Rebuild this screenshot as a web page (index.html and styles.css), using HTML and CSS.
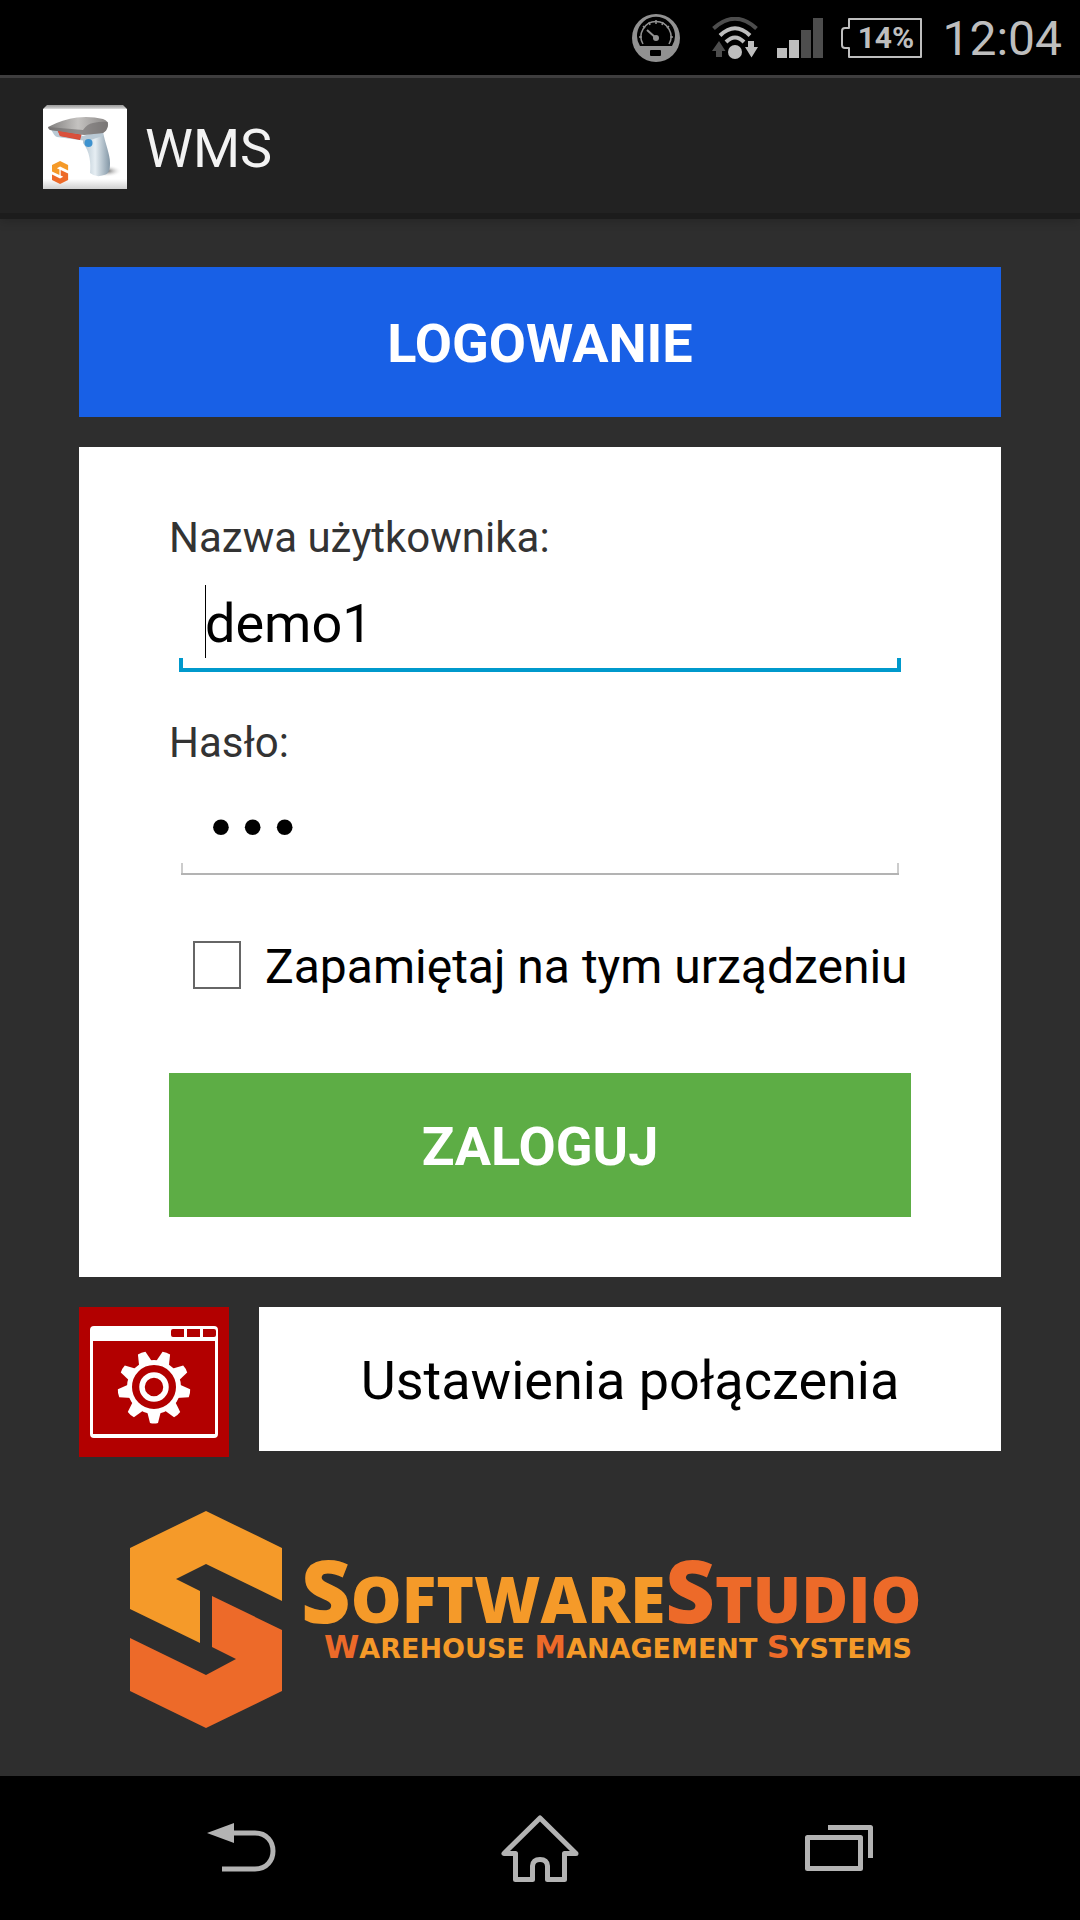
FILE: index.html
```html
<!DOCTYPE html>
<html lang="pl">
<head>
  <meta charset="UTF-8" />
  <title>WMS – Logowanie</title>
  <meta name="viewport" content="width=device-width, initial-scale=1" />
  <link rel="stylesheet" href="styles.css">
</head>
<body>

<div class="status-bar">
  <svg class="gauge" width="48" height="48" viewBox="0 0 48 48">
    <circle cx="24" cy="24" r="24" fill="#919191"/>
    <path d="M8 32 A19 19 0 1 1 40 32 Z" fill="#000"/>
    <path d="M11 30 A15 15 0 1 1 37 30" fill="none" stroke="#919191" stroke-width="1.5"/>
    <path d="M7 23h3M41 23h-3M11 12l2 2M37 12l-2 2M17 8l1 3M31 8l-1 3M24 6v4" stroke="#919191" stroke-width="1.5"/>
    <path d="M15 16l9 8" stroke="#919191" stroke-width="2"/>
    <circle cx="24" cy="24" r="3" fill="#919191"/>
    <rect x="18" y="36" width="11" height="6" rx="1" fill="#000"/>
  </svg>
  <svg class="wifi" width="46" height="42" viewBox="0 0 46 42" fill="none">
    <path d="M1.500 11.500 Q23 -8 44.500 11.500" stroke="#4d4d4d" stroke-width="4"/>
    <path d="M8 18.500 Q23 4 38 18.500" stroke="#bebebe" stroke-width="4"/>
    <path d="M14 25 Q23 16 32 25" stroke="#bebebe" stroke-width="4"/>
    <circle cx="23" cy="35" r="7" fill="#bebebe"/>
    <path d="M7 24l6.500 10H10v6H4v-6H0z" fill="#4d4d4d"/>
    <path d="M36 24h6v6h4l-6.500 10.500L33 30h3z" fill="#bebebe"/>
  </svg>
  <svg class="signal" width="46" height="40" viewBox="0 0 46 40">
    <path d="M0 30h10v10H0zM12 22h10v18H12z" fill="#bebebe"/>
    <path d="M24 12h10v28H24zM36 0h10v40H36z" fill="#4d4d4d"/>
  </svg>
  <div class="battery">
    <svg width="81" height="40" viewBox="0 0 81 40" fill="none">
      <path d="M8 10V1H80V39H8V30H4Q1 30 1 27V13Q1 10 4 10Z" stroke="#bebebe" stroke-width="2" stroke-linejoin="round"/>
    </svg>
    <span>14%</span>
  </div>
  <time class="clock">12:04</time>
</div>

<header class="action-bar">
  <svg width="84" height="84" viewBox="0 0 84 84">
    <defs>
      <linearGradient id="tile" x1="0" y1="0" x2="0" y2="1">
        <stop offset="0" stop-color="#999"/>
        <stop offset=".04" stop-color="#ccc"/>
        <stop offset=".05" stop-color="#fff"/>
        <stop offset=".88" stop-color="#fff"/>
        <stop offset="1" stop-color="#cfcfcf"/>
      </linearGradient>
      <linearGradient id="grip" x1="0" y1="0" x2="1" y2="0">
        <stop offset="0" stop-color="#b4c4cf"/>
        <stop offset=".45" stop-color="#e6eef3"/>
        <stop offset="1" stop-color="#8397a6"/>
      </linearGradient>
      <linearGradient id="head" x1="0" y1="0" x2="1" y2="0">
        <stop offset="0" stop-color="#807e7d"/>
        <stop offset=".5" stop-color="#c4c2c0"/>
        <stop offset="1" stop-color="#8a8786"/>
      </linearGradient>
      <radialGradient id="shade">
        <stop offset="0" stop-color="#666"/>
        <stop offset="1" stop-color="#fff" stop-opacity="0"/>
      </radialGradient>
    </defs>
    <path d="M4 0H80L84 4V84H0V4Z" fill="url(#tile)"/>
    <ellipse cx="64" cy="66" rx="15" ry="6" fill="url(#shade)"/>
    <path d="M40 32L60 27C62 38 67 49 67 58C67 65 66 69 61 70Q53 73 47 68C48 58 47 47 40 38Z" fill="url(#grip)"/>
    <path d="M8 24L40 31L60 25L60 31L44 36L14 32Q11 31 8 24Z" fill="#b9c9d4"/>
    <path d="M14 24L39 28L37 35L17 31Z" fill="#d2432f"/>
    <path d="M19 28L33 31V33L18 30Z" fill="#ee8a78"/>
    <path d="M5 22Q20 14 34 12.500Q48 11 60 14Q66 16 65 21Q64 26 60 28L41 30L7 25Q5 24 5 22Z" fill="url(#head)"/>
    <path d="M5 22L40 25Q44 19 50 18Q59 16 65 17Q65 25 60 28L41 30L7 25Z" fill="#6e6b6a" opacity=".6"/>
    <path d="M15 26L38 30L37 34L17 31Z" fill="#d9503c"/>
    <circle cx="45.500" cy="38" r="4" fill="#3d92cf"/>
    <path transform="translate(9 56) scale(.106)" fill="#f59a29" d="M76 0L152 37V90L76 53L46 68L70 80V132L0 98V37Z"/>
    <path transform="translate(9 56) scale(.106)" fill="#ed6a29" d="M82 85L152 119V180L76 217L0 180V127L76 164L106 148L82 136Z"/>
  </svg>
  <h1>WMS</h1>
</header>

<main class="content">
  <h2 class="title">LOGOWANIE</h2>

  <form class="card">
    <label class="field-label" for="user">Nazwa użytkownika:</label>
    <input class="field active" type="text" id="user" value="demo1">

    <label class="field-label" for="password">Hasło:</label>
    <input class="field" type="password" id="password" value="123">

    <div class="remember">
      <input type="checkbox" id="remember">
      <label for="remember">Zapamiętaj na tym urządzeniu</label>
    </div>

    <button class="login" type="button">ZALOGUJ</button>
  </form>

  <div class="settings">
    <button class="settings-icon" type="button" aria-label="Ustawienia">
      <svg width="150" height="150" viewBox="0 0 150 150" fill="#fff">
        <path fill-rule="evenodd" d="M15 19H135Q139 19 139 23V127Q139 131 135 131H15Q11 131 11 127V23Q11 19 15 19ZM14 34V127H136V34Z"/>
        <path fill="#b20000" d="M94 22H105V30H94Q92 30 92 28V24Q92 22 94 22ZM108 22H121V30H108ZM124 22H135Q137 22 137 24V28Q137 30 135 30H124Z"/>
        <g transform="translate(75 80)">
          <path id="tooth" d="M-7 24L-4 36Q0 37 4 36L7 24Z"/>
          <use href="#tooth" transform="rotate(40)"/>
          <use href="#tooth" transform="rotate(80)"/>
          <use href="#tooth" transform="rotate(120)"/>
          <use href="#tooth" transform="rotate(160)"/>
          <use href="#tooth" transform="rotate(200)"/>
          <use href="#tooth" transform="rotate(240)"/>
          <use href="#tooth" transform="rotate(280)"/>
          <use href="#tooth" transform="rotate(320)"/>
          <circle r="24.500" fill="none" stroke="#fff" stroke-width="5"/>
          <circle r="12" fill="none" stroke="#fff" stroke-width="5.500"/>
        </g>
      </svg>
    </button>
    <button class="settings-text" type="button">Ustawienia połączenia</button>
  </div>

  <div class="brand">
    <svg width="152" height="217" viewBox="0 0 152 217">
      <path fill="#f59a29" d="M76 0L152 37V90L76 53L46 68L70 80V132L0 98V37Z"/>
      <path fill="#ed6a29" d="M82 85L152 119V180L76 217L0 180V127L76 164L106 148L82 136Z"/>
    </svg>
    <div class="brand-text">
      <p class="brand-name"><b>S</b>OFTWARE<span class="red"><b>S</b>TUDIO</span></p>
      <p class="brand-sub"><b>W</b>AREHOUSE <b>M</b>ANAGEMENT <b>S</b>YSTEMS</p>
    </div>
  </div>
</main>

<nav class="nav-bar">
  <button type="button" aria-label="Wstecz">
    <svg width="70" height="50" viewBox="0 0 70 50">
      <path d="M1 10L28 0V20Z" fill="#b3b3b3"/>
      <path d="M27 10H49C73 10 73 46 49 46H16" fill="none" stroke="#b3b3b3" stroke-width="5"/>
    </svg>
  </button>
  <button type="button" aria-label="Ekran główny">
    <svg width="80" height="70" viewBox="0 0 80 70">
      <path d="M40 5L4 40.500H15.500V66.500H32.500V53Q33 46.500 40 46.500Q47 46.500 47.500 53V66.500H64.500V40.500H76Z" fill="none" stroke="#b3b3b3" stroke-width="5" stroke-linejoin="round"/>
    </svg>
  </button>
  <button type="button" aria-label="Ostatnie aplikacje">
    <svg width="68" height="46" viewBox="0 0 68 46" fill="none" stroke="#b3b3b3" stroke-width="5" stroke-linejoin="round">
      <rect x="2.500" y="12.500" width="53" height="31"/>
      <path d="M23 2.500H65.500V33"/>
    </svg>
  </button>
</nav>

</body>
</html>
```

FILE: styles.css
```css
:root {
  --bg: #2e2e2e;
  --bar: #222;
  --blue: #1860e6;
  --green: #5dad45;
  --red: #b20000;
  --holo: #0099cc;
  --line: #b3b3b3;
  --logo-orange: #f59a29;
  --logo-red: #ed6a29;
}

* {
  box-sizing: border-box;
}

body {
  margin: 0;
  min-height: 100vh;
  display: flex;
  flex-direction: column;
  background: var(--bg);
  font-family: Roboto, sans-serif;
  color: #000;
}

h1, h2, p {
  margin: 0;
}

svg {
  display: block;
  flex: none;
}

button, input {
  font-family: inherit;
  border: none;
  border-radius: 0;
  padding: 0;
  margin: 0;
}

/* status bar */
.status-bar {
  display: flex;
  align-items: center;
  justify-content: flex-end;
  height: 75px;
  padding-right: 18px;
  background: #000;
  color: #bebebe;
}

.wifi {
  margin-left: 32px;
}

.signal {
  margin-left: 19px;
}

.battery {
  position: relative;
  margin-left: 18px;
}

.battery span {
  position: absolute;
  inset: 0 0 0 8px;
  line-height: 40px;
  text-align: center;
  font-size: 30px;
  font-weight: 700;
}

.clock {
  margin-left: 20px;
  padding-top: 2px;
  font-size: 48px;
}

/* action bar */
.action-bar {
  display: flex;
  align-items: center;
  gap: 18px;
  height: 144px;
  padding: 3px 43px 0;
  background: var(--bar);
  border-top: 3px solid #3e3d3e;
  border-bottom: 6px solid #1c1c1c;
  box-shadow: 0 2px 10px rgba(0, 0, 0, 0.2);
}

.action-bar h1 {
  padding-top: 3px;
  font-size: 54px;
  font-weight: 400;
  color: #f3f3f3;
}

/* content */
.content {
  flex: 1;
  display: flex;
  flex-direction: column;
  gap: 30px;
  padding: 48px 79px 0;
}

.title {
  padding-top: 4px;
  background: var(--blue);
  color: #fff;
  font-size: 54px;
  font-weight: 700;
  line-height: 146px;
  text-align: center;
}

.card {
  display: flex;
  flex-direction: column;
  padding: 65px 90px 60px;
  background: #fff;
}

.field-label {
  font-size: 42px;
  line-height: 52px;
  color: #333;
}

.field {
  height: 95px;
  margin: 13px 10px 45px;
  padding: 0 26px 2px;
  outline: none;
  font-size: 54px;
  color: #000;
  background:
    linear-gradient(var(--line), var(--line)) 50% 91px / calc(100% - 4px) 2px no-repeat,
    linear-gradient(#ccc, #ccc) 2px 81px / 2px 10px no-repeat,
    linear-gradient(#ccc, #ccc) right 2px top 81px / 2px 10px no-repeat,
    #fff;
}

.field[type="password"] {
  font-family: "DejaVu Sans", sans-serif;
}

/* focused field with the cursor before the first letter */
.field.active {
  background:
    linear-gradient(var(--holo), var(--holo)) 0 91px / 100% 4px no-repeat,
    linear-gradient(var(--holo), var(--holo)) 0 81px / 4px 10px no-repeat,
    linear-gradient(var(--holo), var(--holo)) 100% 81px / 4px 10px no-repeat,
    linear-gradient(#000, #000) 26px 8px / 1px 73px no-repeat,
    #fff;
}

.remember {
  display: flex;
  align-items: center;
  gap: 24px;
  height: 58px;
  margin: 14px 0 79px;
  padding-left: 24px;
  font-size: 48px;
  white-space: nowrap;
}

.remember input {
  appearance: none;
  flex: none;
  width: 48px;
  height: 48px;
  border: 2px solid #666;
  background: #fff;
}

.remember input:checked {
  background: var(--holo);
}

.remember label {
  padding-top: 2px;
}

.login {
  height: 144px;
  padding-top: 2px;
  background: var(--green);
  color: #fff;
  font-size: 54px;
  font-weight: 700;
}

.settings {
  display: flex;
  align-items: flex-start;
  gap: 30px;
}

.settings-icon {
  background: var(--red);
}

.settings-text {
  flex: 1;
  height: 144px;
  padding-top: 2px;
  background: #fff;
  color: #000;
  font-size: 54px;
}

/* logo */
.brand {
  display: flex;
  gap: 19px;
  margin-top: 24px;
  padding-left: 51px;
}

.brand-text {
  padding-top: 55px;
  font-weight: 700;
  color: var(--logo-orange);
  white-space: nowrap;
}

.brand-text b {
  line-height: 0;
}

.brand-name {
  font-family: "Open Sans", sans-serif;
  font-size: 64px;
  font-weight: 800;
  line-height: 66px;
}

.brand-name b {
  font-size: 86px;
  font-weight: 800;
}

.red, .brand-sub b {
  color: var(--logo-red);
}

.brand-sub {
  padding-left: 23px;
  font-family: "DejaVu Sans", sans-serif;
  font-size: 27px;
  line-height: 34px;
}

.brand-sub b {
  font-size: 32px;
}

/* navigation bar */
.nav-bar {
  display: flex;
  height: 144px;
  padding: 0 91px;
  background: #000;
}

.nav-bar button {
  flex: 1;
  display: flex;
  align-items: center;
  justify-content: center;
  background: none;
}

button {
  cursor: pointer;
}
```
